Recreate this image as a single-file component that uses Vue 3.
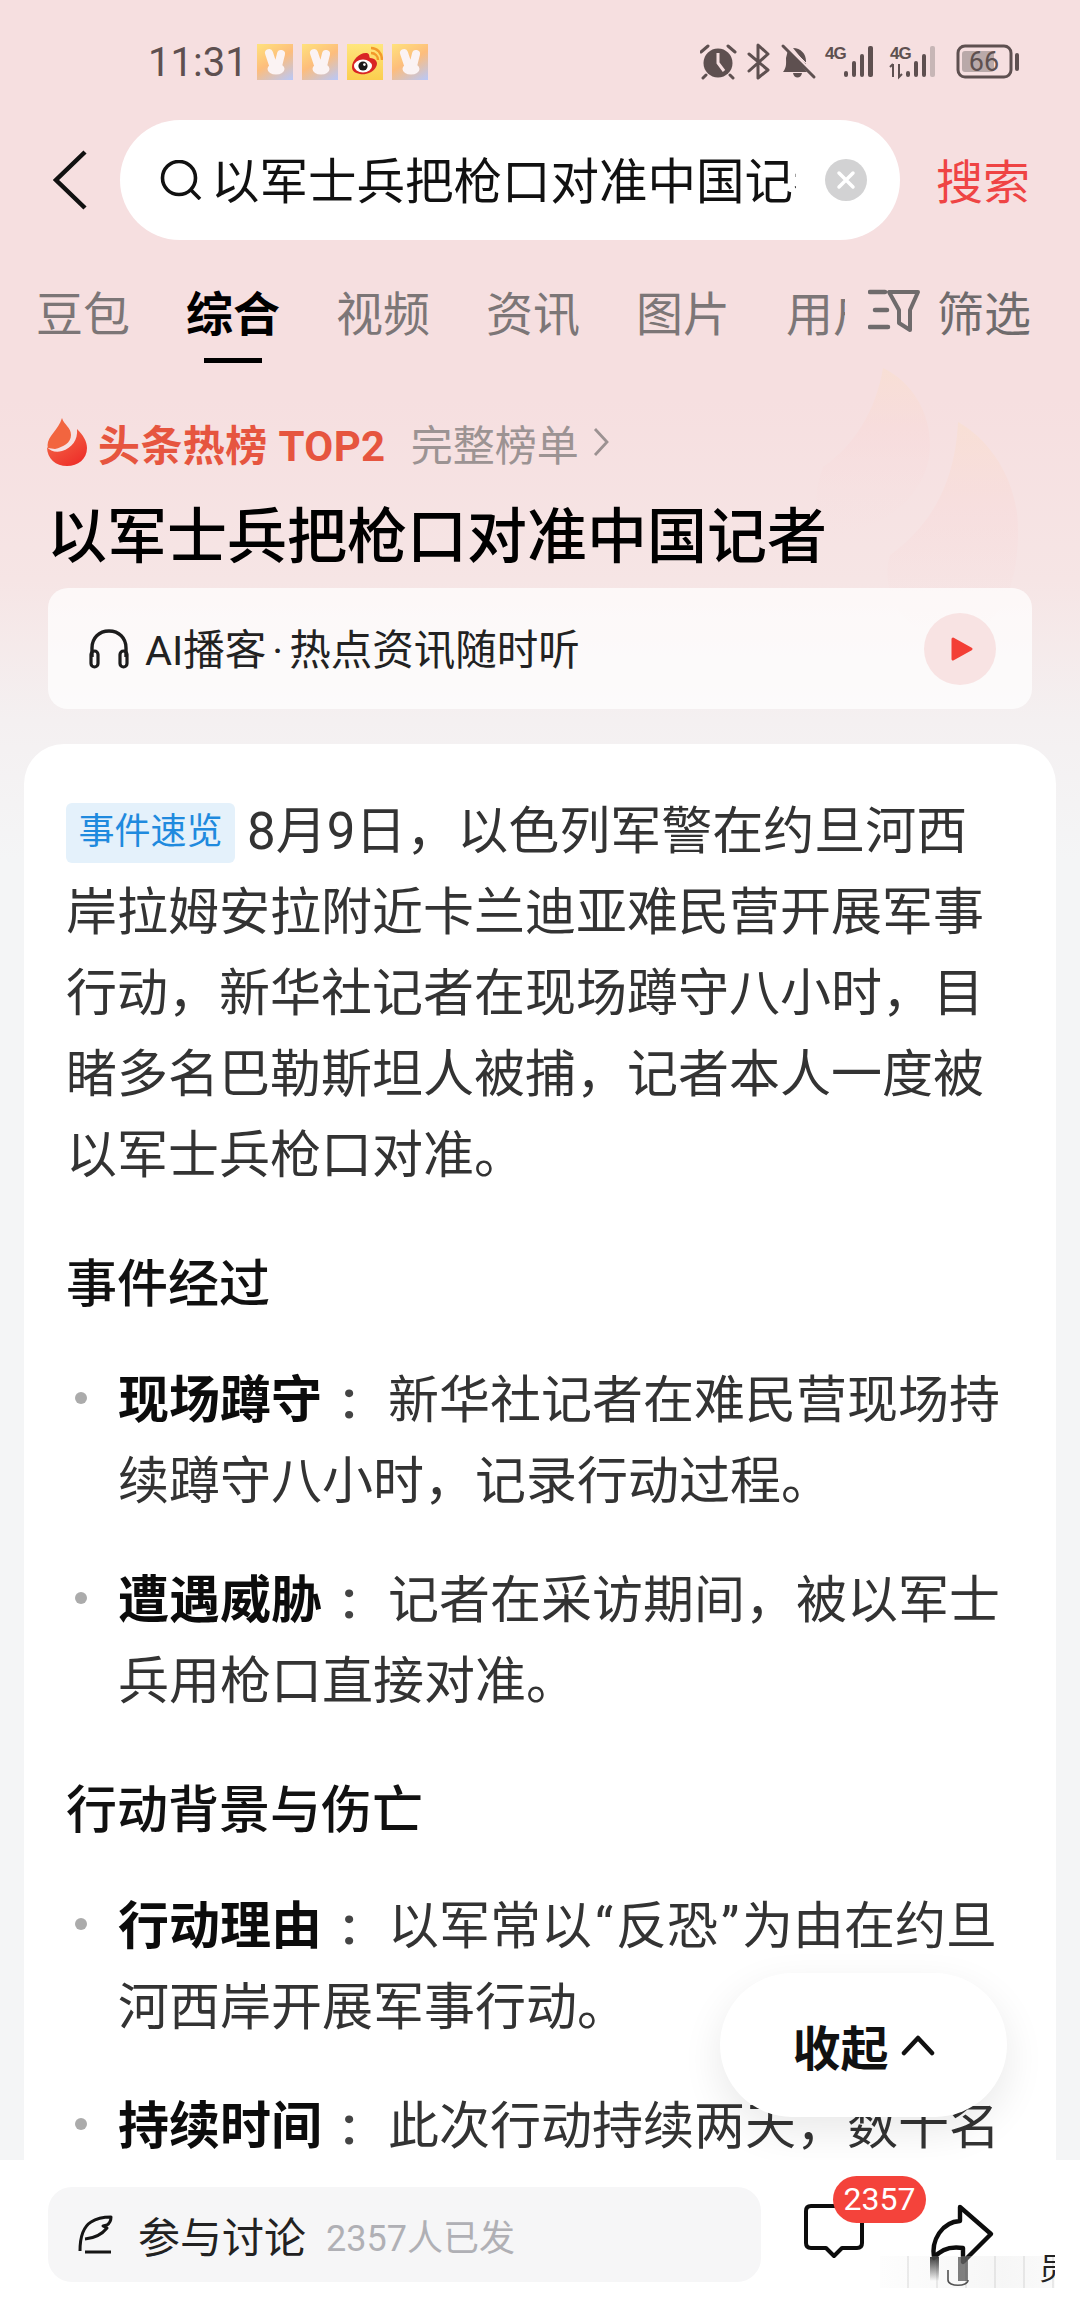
<template>
  <div class="page">
    <svg class="bg-flames" viewBox="780 350 300 360" width="300" height="360" aria-hidden="true">
      <defs>
        <linearGradient id="bgf" x1="0" y1="0" x2="0" y2="1">
          <stop offset="0" stop-color="#f9dfcf" stop-opacity=".65" />
          <stop offset=".4" stop-color="#f8d9d9" stop-opacity=".45" />
          <stop offset="1" stop-color="#f7e0e0" stop-opacity="0" />
        </linearGradient>
      </defs>
      <path d="M883 368 C912 382 930 412 930 445 C930 490 890 528 835 535 C810 520 815 490 823 467 C855 445 876 410 883 368Z" fill="url(#bgf)" />
      <path d="M958 422 C990 440 1018 480 1018 530 C1018 590 1000 625 960 640 C900 640 880 590 890 555 C925 530 955 490 958 422Z" fill="url(#bgf)" />
    </svg>

    <header class="status">
      <span class="time">11:31</span>
      <div class="notifs">
        <svg class="notif rabbit" viewBox="0 0 36 36"><path d="M12 9 L17 24 M24 10 L21 22" stroke="#fbf3f3" stroke-width="8" stroke-linecap="round" fill="none" /><ellipse cx="19" cy="25" rx="8.5" ry="5.5" fill="#fbf3f3" /></svg>
        <svg class="notif rabbit" viewBox="0 0 36 36"><path d="M12 9 L17 24 M24 10 L21 22" stroke="#fbf3f3" stroke-width="8" stroke-linecap="round" fill="none" /><ellipse cx="19" cy="25" rx="8.5" ry="5.5" fill="#fbf3f3" /></svg>
        <svg class="notif weibo" viewBox="0 0 36 36">
          <path d="M5 23 C5 16 13 8 20 9 C23 10 22 13 23 14 C28 14 32 18 29 23 C26 29 18 31 13 30 C8 29 5 27 5 23Z" fill="#d92524" />
          <ellipse cx="16" cy="22" rx="9" ry="6.5" fill="#fff" />
          <circle cx="16" cy="22" r="4.6" fill="#1a1a1a" />
          <circle cx="17.4" cy="20.6" r="1.3" fill="#fff" />
          <path d="M24 9 C28 9 31 12 31 16 M24 4 C30 4 35 9 35 16" stroke="#f39a2b" stroke-width="2.4" fill="none" />
        </svg>
        <svg class="notif rabbit" viewBox="0 0 36 36"><path d="M12 9 L17 24 M24 10 L21 22" stroke="#fbf3f3" stroke-width="8" stroke-linecap="round" fill="none" /><ellipse cx="19" cy="25" rx="8.5" ry="5.5" fill="#fbf3f3" /></svg>
      </div>
      <svg class="sys" viewBox="700 40 322 42" width="322" height="42">
        <g fill="#5e5050" stroke="none">
          <circle cx="718" cy="63" r="14.5" />
          <path d="M718 53 V63 L724 71" stroke="#f6dfe0" stroke-width="3" fill="none" />
          <path d="M701 52 L708 46 M735 52 L728 46 M706 75 L703 78 M730 75 L733 78" stroke="#5e5050" stroke-width="3" stroke-linecap="round" fill="none" />
          <path d="M749 54 L768 70 L758 78 V45 L768 54 L749 71" stroke="#5e5050" stroke-width="3" stroke-linejoin="round" stroke-linecap="round" fill="none" />
          <path d="M788 50 L807 72 H783 C787 67 786 62 786 58 Z M793 48 C801 48 806 54 806 61 V64 Z" />
          <path d="M793 73 H802 C801 79 794 79 793 73Z" />
          <path d="M783 46 L814 77" stroke="#5e5050" stroke-width="3" stroke-linecap="round" />
          <path d="M783 46 L814 77" stroke="#f6dfe0" stroke-width="1" transform="translate(3 -3)" />
          <text x="825" y="59" class="fourg">4G</text>
          <rect x="844" y="71" width="4" height="6" rx="2" />
          <rect x="852" y="61" width="4" height="16" rx="2" />
          <rect x="860" y="54" width="4" height="23" rx="2" />
          <rect x="868" y="46" width="5" height="31" rx="2" />
          <text x="890" y="59" class="fourg">4G</text>
          <path d="M893 64 V77 M890 67 L893 64 M899 64 V77 L902 74" stroke="#5e5050" stroke-width="2" fill="none" />
          <rect x="906" y="71" width="4" height="6" rx="2" />
          <rect x="914" y="61" width="4" height="16" rx="2" />
          <rect x="922" y="54" width="4" height="23" rx="2" />
          <rect x="930" y="46" width="5" height="31" rx="2" fill="#c7b6b6" />
          <rect x="958" y="46" width="53" height="31" rx="7" fill="none" stroke="#5e5050" stroke-width="3" />
          <rect x="962" y="51" width="32" height="21" rx="3" fill="#b9a9a9" />
          <text x="984" y="71" class="batt" text-anchor="middle">66</text>
          <rect x="1015" y="53" width="4" height="18" rx="2" />
        </g>
      </svg>
    </header>

    <div class="searchrow">
      <svg class="back" viewBox="0 0 36 60" width="36" height="60"><path d="M32 2 L3 30 L32 58" fill="none" stroke="#111" stroke-width="4.5" /></svg>
      <div class="pill">
        <svg class="mag" viewBox="0 0 42 40" width="42" height="40"><circle cx="19" cy="18" r="16.5" fill="none" stroke="#111" stroke-width="3.6" /><path d="M31 30 L40 39" stroke="#111" stroke-width="3.6" /></svg>
        <span class="query">以军士兵把枪口对准中国记者</span>
        <svg class="clear" viewBox="0 0 42 42" width="42" height="42"><circle cx="21" cy="21" r="21" fill="#d2d2d3" /><path d="M14 14 L28 28 M28 14 L14 28" stroke="#fff" stroke-width="3.5" stroke-linecap="round" /></svg>
      </div>
      <span class="go">搜索</span>
    </div>

    <div class="tabsrow">
      <nav class="tabs">
        <span class="tab">豆包</span>
        <span class="tab active">综合</span>
        <span class="tab">视频</span>
        <span class="tab">资讯</span>
        <span class="tab">图片</span>
        <span class="tab">用户</span>
      </nav>
      <div class="filter">
        <svg viewBox="0 0 54 44" width="54" height="44"><path d="M2 3 H17 M7 21 H19 M2 38 H20" stroke="#6f6b6c" stroke-width="4.5" stroke-linecap="round" /><path d="M21 3 H50 L42 21 V41 L31 34 V21 Z" fill="none" stroke="#6f6b6c" stroke-width="4" stroke-linejoin="round" /></svg>
        <span>筛选</span>
      </div>
    </div>

    <div class="hot">
      <svg class="flame" viewBox="0 0 40 48" width="40" height="48">
        <defs>
          <linearGradient id="fl" x1="0" y1="0" x2=".7" y2="1"><stop offset="0" stop-color="#f4734c" /><stop offset="1" stop-color="#ee2f2a" /></linearGradient>
        </defs>
        <path d="M15 0 C17 7 24 9 24 17 C24 25 16 29 8 31 L1 30 C-2 20 11 13 15 0Z" fill="#f2653f" />
        <path d="M30 11 C36 17 40 23 40 30 C40 41 31 48 20 48 C9 48 0 41 0 29 C3 33 9 35 15 33 C25 30 31 22 30 11Z" fill="url(#fl)" />
      </svg>
      <strong class="hot-title">头条热榜 TOP2</strong>
      <span class="hot-more">完整榜单</span>
      <svg viewBox="0 0 16 30" width="16" height="30"><path d="M2 2 L14 15 L2 28" fill="none" stroke="#9c9292" stroke-width="2.8" /></svg>
    </div>

    <h1 class="title">以军士兵把枪口对准中国记者</h1>

    <div class="audio">
      <svg viewBox="0 0 40 40" width="40" height="40"><path d="M3 28 V19 C3 9 10 2 20 2 C30 2 37 9 37 19 V28" fill="none" stroke="#1c1c1c" stroke-width="3.4" /><rect x="2" y="22" width="7" height="16" rx="3.5" fill="none" stroke="#1c1c1c" stroke-width="3.2" /><rect x="31" y="22" width="7" height="16" rx="3.5" fill="none" stroke="#1c1c1c" stroke-width="3.2" /></svg>
      <span class="audio-text">AI播客<span class="middot">·</span>热点资讯随时听</span>
      <span class="play"><svg viewBox="0 0 24 26" width="24" height="26"><path d="M3 3 L21 13 L3 23Z" fill="#f33f36" stroke="#f33f36" stroke-width="3" stroke-linejoin="round" /></svg></span>
    </div>

    <main class="scroll">
      <article class="card">
        <p class="lead"><span class="tag">事件速览</span>8月9日，以色列军警在约旦河西岸拉姆安拉附近卡兰迪亚难民营开展军事行动，新华社记者在现场蹲守八小时，目睹多名巴勒斯坦人被捕，记者本人一度被以军士兵枪口对准。</p>
        <h2 class="sec first">事件经过</h2>
        <ul class="list">
          <li v-for="it in part1" :key="it.k" class="item"><i class="dot"></i><p class="txt"><b>{{ it.k }}</b><span class="colon">:</span>{{ it.v }}</p></li>
        </ul>
        <h2 class="sec">行动背景与伤亡</h2>
        <ul class="list">
          <li class="item"><i class="dot"></i><p class="txt"><b>行动理由</b><span class="colon">:</span>以军常以<span class="quote">“</span>反恐<span class="quote">”</span>为由在约旦河西岸开展军事行动。</p></li>
          <li class="item"><i class="dot"></i><p class="txt"><b>持续时间</b><span class="colon">:</span>此次行动持续两天，数十名巴勒斯坦人被捕。</p></li>
        </ul>
      </article>
      <button class="collapse">收起<svg viewBox="0 0 34 22" width="34" height="22"><path d="M3 19 L17 4 L31 19" fill="none" stroke="#111" stroke-width="4.5" stroke-linecap="round" stroke-linejoin="round" /></svg></button>
    </main>

    <footer class="bar">
      <div class="input">
        <svg viewBox="0 0 36 40" width="36" height="40"><path d="M3 36 C3 24 6 12 14 7 C20 3 28 2 34 2 C34 5 33 8 30 10 L26 11 L30 13 C26 18 20 23 8 24" fill="none" stroke="#151515" stroke-width="3" stroke-linejoin="round" /><path d="M8 37 H34" stroke="#151515" stroke-width="3" /></svg>
        <span class="join">参与讨论</span>
        <span class="count">2357人已发</span>
      </div>
      <div class="actions">
        <svg class="comment" viewBox="0 0 60 56" width="60" height="56"><path d="M7 2 H53 Q58 2 58 7 V39 Q58 44 53 44 H38 L30 52 L22 44 H7 Q2 44 2 39 V7 Q2 2 7 2Z" fill="none" stroke="#0d0d0d" stroke-width="4" stroke-linejoin="round" /></svg>
        <span class="badge">2357</span>
        <svg class="share" viewBox="925 2200 72 90" width="72" height="90">
          <defs>
            <linearGradient id="sm" x1="0" y1="0" x2="0" y2="1"><stop offset="0" stop-color="#111" /><stop offset="1" stop-color="#111" stop-opacity="0" /></linearGradient>
          </defs>
          <path d="M960 2207 L991 2234 L963 2262 L963 2248 C950 2246 940 2250 934 2258 C931 2240 942 2222 960 2221Z" fill="none" stroke="#0d0d0d" stroke-width="4.4" stroke-linejoin="round" />
          <rect x="930" y="2257" width="9" height="24" fill="url(#sm)" />
          <rect x="958" y="2257" width="10" height="24" fill="#222" opacity=".75" />
          <path d="M948 2270 V2280 C948 2287 968 2287 968 2280" fill="none" stroke="#222" stroke-width="1.6" />
        </svg>
      </div>
      <div class="smear" aria-hidden="true"><span class="frag">员</span></div>
    </footer>
  </div>
</template>

<script setup>
const part1 = [
  { k: '现场蹲守', v: '新华社记者在难民营现场持续蹲守八小时，记录行动过程。' },
  { k: '遭遇威胁', v: '记者在采访期间，被以军士兵用枪口直接对准。' },
]
</script>

<style>
html, body { margin: 0; padding: 0; }
</style>

<style scoped>
* { box-sizing: border-box; }
.page {
  position: relative;
  width: 1080px;
  height: 2310px;
  overflow: hidden;
  display: flex;
  flex-direction: column;
  font-family: Roboto, "Noto Sans CJK SC", sans-serif;
  background: linear-gradient(180deg, #f6dfe0 0, #f6dfe0 400px, #f6e5e5 580px, #f4f0f1 720px, #f4f5f6 860px);
}
.bg-flames { position: absolute; left: 780px; top: 350px; }
.status { position: relative; height: 120px; padding: 39px 0 0 148px; display: flex; align-items: flex-start; color: #5e5050; }
.time { font-size: 40px; line-height: 48px; width: 109px; }
.notifs { display: flex; gap: 9px; margin-top: 5px; }
.notif { width: 36px; height: 36px; display: block; }
.rabbit { background: linear-gradient(150deg, #ffe27c 0%, #fdbd7c 48%, #b7c8fb 100%); }
.weibo { background: linear-gradient(180deg, #ffe67e, #fbce4e); }
.sys { margin-left: 272px; margin-top: 1px; }
.fourg { font-size: 17px; font-weight: 700; font-family: "Liberation Sans", sans-serif; letter-spacing: -1px; }
.batt { font-size: 27px; font-family: Roboto, sans-serif; }
.searchrow { position: relative; height: 120px; display: flex; align-items: center; }
.back { margin-left: 53px; margin-right: 31px; }
.pill { width: 780px; height: 120px; background: #fff; border-radius: 60px; display: flex; align-items: center; padding-left: 40px; }
.query { width: 585px; margin-left: 9px; margin-bottom: 5px; font-size: 48.5px; color: #111; white-space: nowrap; overflow: hidden; }
.clear { margin-left: 29px; }
.go { margin-left: 36px; margin-bottom: 4px; font-size: 47px; color: #ef4444; }
.tabsrow { position: relative; height: 146px; display: flex; align-items: center; }
.tabs { width: 845px; padding: 0 0 5px 36px; display: flex; gap: 56px; overflow: hidden; height: 146px; align-items: center; }
.tab { position: relative; flex: none; font-size: 47px; color: #7c7677; }
.tab.active { color: #000; font-weight: 700; }
.tab.active::after { content: ""; position: absolute; left: 18px; width: 58px; height: 5px; top: 82px; background: #000; }
.filter { margin-left: 23px; display: flex; align-items: center; gap: 15px; font-size: 47px; color: #6f6b6c; padding-bottom: 5px; }
.hot { position: relative; margin-top: 26px; height: 60px; padding-left: 47px; display: flex; align-items: center; }
.hot-title { margin-left: 11px; font-size: 42px; color: #e6553f; font-weight: 700; letter-spacing: .4px; }
.hot-more { margin-left: 25px; margin-right: 14px; font-size: 42px; color: #9c9393; }
.title { position: relative; margin: 26px 0 0; padding-left: 47px; font-size: 60px; line-height: 80px; font-weight: 500; color: #000; }
.audio { position: relative; margin: 10px 48px 0; height: 121px; border-radius: 20px; background: rgba(255, 255, 255, .72); display: flex; align-items: center; padding-left: 41px; }
.audio-text { margin-left: 16px; margin-bottom: 3px; font-size: 41.5px; color: #222; }
.middot { padding: 0 6px; }
.play { margin-left: auto; margin-right: 36px; width: 72px; height: 72px; border-radius: 50%; background: #f8e3e3; display: flex; align-items: center; justify-content: center; padding-left: 4px; }
.scroll { position: relative; flex: 1; margin-top: 35px; min-height: 0; overflow: hidden; }
.card { margin: 0 24px; background: #fff; border-radius: 40px 40px 0 0; padding: 47px 43px 0 42px; min-height: 1416px; color: #333; font-size: 51px; line-height: 81px; }
.lead { margin: 0; }
.tag { display: inline-block; height: 60px; line-height: 58px; width: 169px; text-align: center; margin-right: 12px; background: #e4f1fb; color: #1f8ade; font-size: 36px; border-radius: 6px; vertical-align: 5px; }
.sec { margin: 48px 0 0; font-size: 51px; line-height: 81px; font-weight: 500; color: #111; }
.list { list-style: none; margin: 35px 0 0; padding: 0; display: flex; flex-direction: column; gap: 38px; }
.item { display: flex; padding-left: 9px; }
.dot { flex: none; width: 12px; height: 12px; margin-top: 32px; border-radius: 50%; background: #ababab; margin-right: 31px; }
.txt { margin: 0; }
.txt b { font-weight: 700; color: #0c0c0c; }
.colon { display: inline-block; width: 66px; padding-left: 20px; text-align: left; color: #444; font-weight: 700; }
.quote { display: inline-block; width: 24px; text-align: center; }
.collapse { position: absolute; left: 720px; top: 1229px; width: 287px; height: 144px; border: 0; border-radius: 72px; background: #fff; box-shadow: 0 14px 40px rgba(0, 0, 0, .09); font: 700 48px Roboto, "Noto Sans CJK SC", sans-serif; color: #111; display: flex; align-items: center; justify-content: center; gap: 12px; }
.bar { position: relative; height: 150px; background: #fff; padding: 27px 0 0 48px; display: flex; }
.input { width: 713px; height: 95px; background: #f6f6f7; border-radius: 24px; display: flex; align-items: center; padding-left: 29px; }
.join { margin-left: 25px; font-size: 42px; color: #222; }
.count { margin-left: 20px; font-size: 36px; color: #b0b0b5; }
.actions { position: relative; flex: 1; }
.comment { position: absolute; left: 43px; top: 17px; }
.badge { position: absolute; left: 72px; top: -11px; width: 93px; height: 47px; border-radius: 24px; background: #f4433b; color: #fff; font-size: 32px; line-height: 47px; text-align: center; }
.share { position: absolute; left: 164px; top: 13px; }
.smear { position: absolute; left: 880px; top: 96px; width: 175px; height: 32px; background: repeating-linear-gradient(90deg, transparent 0 27px, rgba(0, 0, 0, .07) 27px 29px), linear-gradient(90deg, rgba(235, 235, 235, .1), rgba(230, 230, 230, .35) 70%, rgba(230, 230, 230, .2)); }
.frag { position: absolute; right: 0; top: -4px; width: 16px; height: 34px; overflow: hidden; font-size: 30px; line-height: 34px; color: #222; }
</style>
